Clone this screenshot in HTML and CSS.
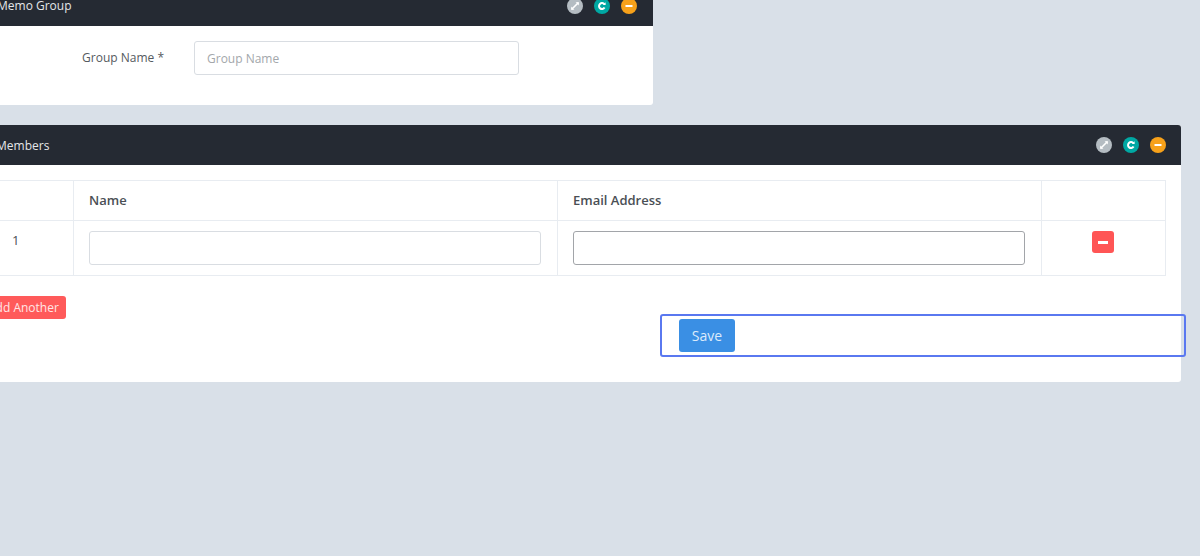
FILE: index.html
```html
<!DOCTYPE html>
<html lang="en">
<head>
<meta charset="utf-8">
<title>Memo Group</title>
<link rel="stylesheet" href="styles.css">
</head>
<body>
<main class="page">
  <section class="panel panel-small">
    <header class="panel-head">
      <h2 class="panel-title">Memo Group</h2>
      <div class="tools">
        <span class="tool tool-grey"><svg viewBox="0 0 16 16"><path d="M5 11l6-6" class="ico"/><path d="M8.6 4.2h3.2v3.2zM4.2 8.6v3.2h3.2z" class="ico-fill"/></svg></span>
        <span class="tool tool-teal"><svg viewBox="0 0 16 16"><path d="M10.4 6.2A3 3 0 1 0 10.6 9.6" class="ico ico-bold"/><path d="M8.8 7h2.8V4.2z" class="ico-fill"/></svg></span>
        <span class="tool tool-orange"><svg viewBox="0 0 16 16"><path d="M4.5 8h7" class="ico ico-bold"/></svg></span>
      </div>
    </header>
    <div class="panel-body form-body">
      <label class="field-label" for="group">Group Name *</label>
      <input class="input group-input" id="group" type="text" placeholder="Group Name">
    </div>
  </section>

  <section class="panel panel-wide">
    <header class="panel-head panel-head-tall">
      <h2 class="panel-title">Members</h2>
      <div class="tools">
        <span class="tool tool-grey"><svg viewBox="0 0 16 16"><path d="M5 11l6-6" class="ico"/><path d="M8.6 4.2h3.2v3.2zM4.2 8.6v3.2h3.2z" class="ico-fill"/></svg></span>
        <span class="tool tool-teal"><svg viewBox="0 0 16 16"><path d="M10.4 6.2A3 3 0 1 0 10.6 9.6" class="ico ico-bold"/><path d="M8.8 7h2.8V4.2z" class="ico-fill"/></svg></span>
        <span class="tool tool-orange"><svg viewBox="0 0 16 16"><path d="M4.5 8h7" class="ico ico-bold"/></svg></span>
      </div>
    </header>
    <div class="panel-body members-body">
      <table class="members">
        <colgroup>
          <col class="col-num"><col class="col-field"><col class="col-field"><col>
        </colgroup>
        <thead>
          <tr><th></th><th>Name</th><th>Email Address</th><th></th></tr>
        </thead>
        <tbody>
          <tr>
            <td class="num">1</td>
            <td><input class="input" type="text" aria-label="Name"></td>
            <td><input class="input input-focus" type="text" aria-label="Email Address"></td>
            <td class="act"><button class="btn-remove" type="button" aria-label="Remove"><span class="minus"></span></button></td>
          </tr>
        </tbody>
      </table>
      <button class="btn-add" type="button">Add Another</button>
      <div class="save-row">
        <button class="btn-save" type="button">Save</button>
      </div>
    </div>
  </section>
</main>
</body>
</html>
```
FILE: styles.css
```css
* { box-sizing: border-box; }
html, body { margin: 0; height: 100%; overflow: hidden; }
body {
  background: #d9e0e8;
  font-family: "Open Sans", "Noto Sans", sans-serif;
  font-size: 12px;
  color: #4a4f55;
}
.page { margin: -14px 0 0 -20px; width: 1220px; }
.panel { background: #fff; border-radius: 3px; }
.panel-small { width: 673px; height: 119px; margin-bottom: 20px; }
.panel-wide { width: 1201px; height: 257px; }
.panel-head {
  display: flex;
  align-items: center;
  justify-content: space-between;
  height: 40px;
  padding: 0 15.5px 0 17px;
  background: #252a33;
  border-radius: 3px 3px 0 0;
  color: #e4e6e8;
}
.panel-title { margin: 0; font-size: 12px; font-weight: 400; line-height: 40px; }
.panel-head-tall { padding-left: 16px; }
.panel-head-tall .panel-title { padding-top: 1px; }
.panel-small .panel-head { align-items: flex-start; padding-right: 16px; }
.panel-small .tools { margin-top: 12px; }
.tools { display: flex; gap: 11px; }
.tool { display: block; width: 16px; height: 16px; border-radius: 50%; }
.tool svg { display: block; width: 16px; height: 16px; }
.tool-grey { background: #b4bcc2; }
.tool-teal { background: #00a8a3; }
.tool-orange { background: #f7a11a; }
.ico { fill: none; stroke: #fff; stroke-width: 1.6; stroke-linecap: round; }
.ico-bold { stroke-width: 2; stroke-linecap: butt; }
.ico-fill { fill: #fff; }

.form-body { display: flex; align-items: flex-start; padding: 15px 0 0 0; }
.field-label {
  width: 184px;
  padding-top: 8px;
  text-align: right;
  font-weight: 500;
  line-height: 18px;
  color: #555a60;
}
.group-input { width: 325px; margin-left: 30px; }
.input {
  display: block;
  height: 34px;
  border: 1px solid #d9dde2;
  border-radius: 3px;
  background: #fff;
  padding: 0 12px;
  font: 12px "Open Sans", "Noto Sans", sans-serif;
  color: #4a4f55;
  outline: none;
}
.input::placeholder { color: #a3a7ab; opacity: 1; }
.members .input { width: 100%; }
.members .input-focus { border-color: #a2a5a9; }

.members-body { padding: 15px 15px 0; position: relative; }
.members {
  width: 1171px;
  table-layout: fixed;
  border-collapse: collapse;
}
.col-num { width: 78px; }
.col-field { width: 484px; }
.members th, .members td { border: 1px solid #e8ecf1; }
.members th {
  height: 40px;
  padding: 0 15px 2px;
  text-align: left;
  font-size: 13px;
  font-weight: 600;
  color: #4a4f55;
}
.members td { height: 55px; padding: 10px 16px 10px 15px; vertical-align: top; }
.members .num { text-align: left; line-height: 18px; padding-left: 16px; font-size: 13px; }
.members .act { text-align: center; padding-right: 17px; }
.btn-remove {
  display: inline-flex;
  align-items: center;
  justify-content: center;
  width: 22px;
  height: 22px;
  padding: 0;
  border: 0;
  border-radius: 3px;
  background: #ff5555;
  vertical-align: top;
}
.minus { display: block; width: 10px; height: 3px; background: #fff; }
.btn-add {
  display: block;
  height: 23px;
  margin: 20px 0 0 -14px;
  padding: 0 7px;
  border: 0;
  border-radius: 3px;
  background: #ff5a5a;
  color: #ffe6e6;
  font: 12px/23px "Open Sans", "Noto Sans", sans-serif;
}
.save-row {
  position: absolute;
  left: 679.5px;
  top: 149px;
  width: 526.5px;
  height: 43px;
  padding: 3px 0 0 17.5px;
  border: 2px solid #5a78f0;
  border-radius: 3px;
}
.btn-save {
  display: block;
  width: 56px;
  height: 33px;
  padding: 0;
  border: 0;
  border-radius: 3px;
  background: #3a8fe4;
  color: #dcebfb;
  font: 14px "Open Sans", "Noto Sans", sans-serif;
}
```
